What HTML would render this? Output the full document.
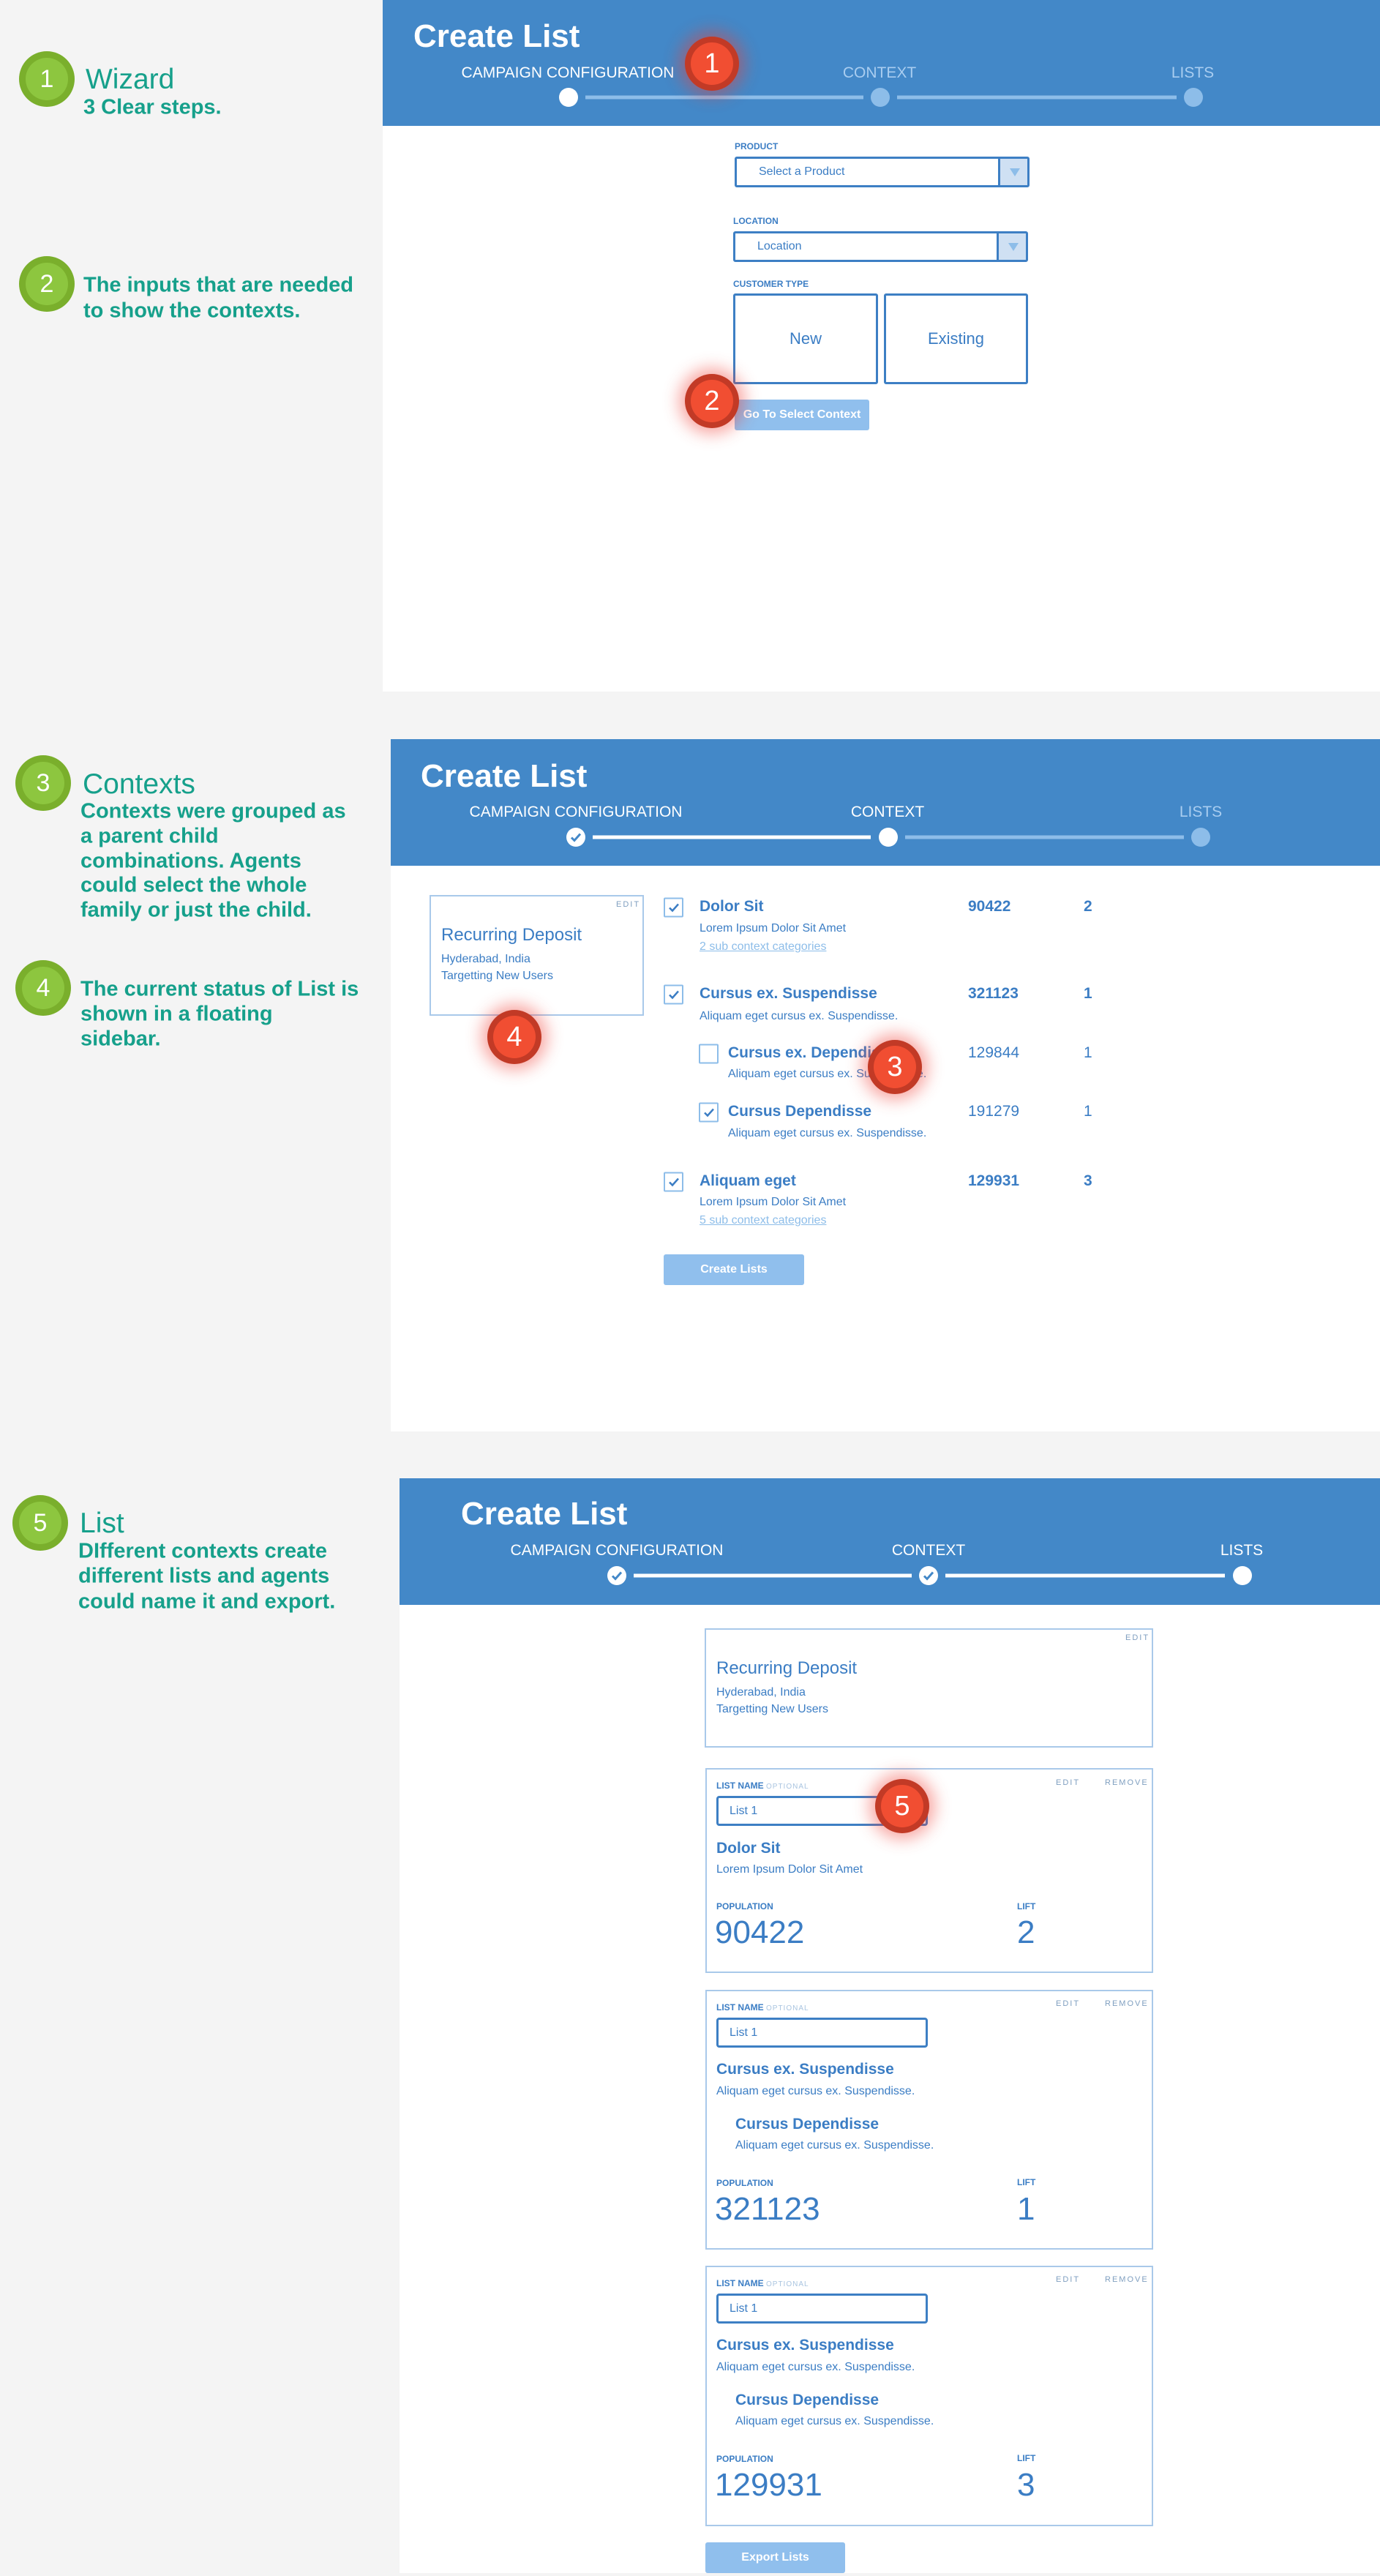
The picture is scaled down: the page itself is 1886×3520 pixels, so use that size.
<!DOCTYPE html>
<html><head><meta charset="utf-8">
<style>
*{margin:0;padding:0;box-sizing:border-box}
body{width:1886px;height:3520px;background:#f4f4f4;position:relative;overflow:hidden;font-family:"Liberation Sans",sans-serif;color:#3b7dc4}
.a{position:absolute;white-space:nowrap}
.c{transform:translate(-50%,-50%)}
.v{transform:translateY(-50%)}
.panel{position:absolute;background:#fff}
.hdr{position:absolute;background:#4388c8}
.title{color:#fff;font-weight:bold;font-size:44px}
.step{font-size:21px;color:#fff}
.step.off{color:#a9cdf0}
.dot{position:absolute;width:26px;height:26px;border-radius:50%;background:#fff;transform:translate(-50%,-50%)}
.dot.off{background:#8dbde9}
.line{position:absolute;height:5px;background:#fff;transform:translateY(-50%)}
.line.off{background:#8dbde9}
.g{position:absolute;width:76px;height:76px;border-radius:50%;background:#7aaf2c;transform:translate(-50%,-50%)}
.g::after{content:"";position:absolute;left:9px;top:9px;width:58px;height:58px;border-radius:50%;background:#8dc63f}
.g span{position:absolute;left:0;top:0;width:76px;height:76px;line-height:76px;text-align:center;color:#fff;font-size:34px;z-index:2}
.ann{color:#16a08b}
.ann.h{font-size:39px}
.ann.t{font-size:29px;font-weight:bold}
.r{position:absolute;width:74px;height:74px;border-radius:50%;background:#c23a26;transform:translate(-50%,-50%);box-shadow:0 0 22px 8px rgba(240,60,50,.45)}
.r::after{content:"";position:absolute;left:8px;top:8px;width:58px;height:58px;border-radius:50%;background:#f14e32}
.r span{position:absolute;left:0;top:0;width:74px;height:74px;line-height:74px;text-align:center;color:#fff;font-size:38px;z-index:2}
.lbl{font-size:12px;font-weight:bold;color:#3b7dc4}
.sel{position:absolute;border:3px solid #3d7fc4;border-radius:3px;background:#fff}
.sel .dd{position:absolute;right:0;top:0;bottom:0;width:40px;background:#cfe0f3;border-left:3px solid #3d7fc4}
.sel .dd::after{content:"";position:absolute;left:13px;top:13px;border-left:7px solid transparent;border-right:7px solid transparent;border-top:11px solid #8dbde9}
.sel .tx{position:absolute;left:30px;top:50%;transform:translateY(-50%);font-size:16px}
.box{position:absolute;border:3px solid #3d7fc4;border-radius:3px;background:#fff;font-size:22px;display:flex;align-items:center;justify-content:center}
.btn{position:absolute;background:#90bfed;border-radius:3px;color:#fff;font-weight:bold;font-size:16px;display:flex;align-items:center;justify-content:center}
.card{position:absolute;border:2px solid #a9c9ea;background:#fff}
.cb{position:absolute;width:27px;height:27px;border:2px solid #8dbde9;border-radius:2px;background:#fff;transform:translateY(-50%)}
.cb svg{position:absolute;left:4px;top:4px}
.it{font-size:21px;font-weight:bold}
.ds{font-size:16px}
.lk{font-size:16px;color:#8dbde9;text-decoration:underline}
.num{font-size:21px;font-weight:bold}
.num.n{font-weight:normal}
.ed{font-size:11px;letter-spacing:2px;color:#7f9fc0}
.inp{position:absolute;border:3px solid #3d7fc4;border-radius:4px;background:#fff;font-size:16px;padding-left:15px;display:flex;align-items:center}
.big{font-size:44px}
</style></head><body>

<!-- ============ PANEL 1 ============ -->
<div class="panel" style="left:523px;top:0;width:1363px;height:945px"></div>
<div class="hdr" style="left:523px;top:0;width:1363px;height:172px"></div>
<div class="a title v" style="left:565px;top:50px">Create List</div>
<div class="a step c" style="left:776px;top:100px">CAMPAIGN CONFIGURATION</div>
<div class="a step off c" style="left:1202px;top:100px">CONTEXT</div>
<div class="a step off c" style="left:1630px;top:100px">LISTS</div>
<div class="line off" style="left:800px;top:133px;width:380px"></div>
<div class="line off" style="left:1226px;top:133px;width:382px"></div>
<div class="dot" style="left:777px;top:133px"></div>
<div class="dot off" style="left:1203px;top:133px"></div>
<div class="dot off" style="left:1631px;top:133px"></div>

<div class="a lbl v" style="left:1004px;top:200px">PRODUCT</div>
<div class="sel" style="left:1004px;top:214px;width:403px;height:42px"><div class="tx">Select a Product</div><div class="dd"></div></div>
<div class="a lbl v" style="left:1002px;top:302px">LOCATION</div>
<div class="sel" style="left:1002px;top:316px;width:403px;height:42px"><div class="tx">Location</div><div class="dd"></div></div>
<div class="a lbl v" style="left:1002px;top:388px">CUSTOMER TYPE</div>
<div class="box" style="left:1002px;top:401px;width:198px;height:124px">New</div>
<div class="box" style="left:1208px;top:401px;width:197px;height:124px">Existing</div>
<div class="btn" style="left:1004px;top:546px;width:184px;height:42px">Go To Select Context</div>
<div class="r" style="left:973px;top:87px"><span>1</span></div>
<div class="r" style="left:973px;top:548px"><span>2</span></div>

<div class="g" style="left:64px;top:108px"><span>1</span></div>
<div class="a ann h v" style="left:117px;top:109px">Wizard</div>
<div class="a ann t v" style="left:114px;top:147px">3 Clear steps.</div>
<div class="g" style="left:64px;top:388px"><span>2</span></div>
<div class="a ann t v" style="left:114px;top:390px">The inputs that are needed</div>
<div class="a ann t v" style="left:114px;top:425px">to show the contexts.</div>

<!-- ============ PANEL 2 ============ -->
<div class="panel" style="left:534px;top:1010px;width:1352px;height:946px"></div>
<div class="hdr" style="left:534px;top:1010px;width:1352px;height:173px"></div>
<div class="a title v" style="left:575px;top:1061px">Create List</div>
<div class="a step c" style="left:787px;top:1110px">CAMPAIGN CONFIGURATION</div>
<div class="a step c" style="left:1213px;top:1110px">CONTEXT</div>
<div class="a step off c" style="left:1641px;top:1110px">LISTS</div>
<div class="line" style="left:810px;top:1144px;width:380px"></div>
<div class="line off" style="left:1237px;top:1144px;width:381px"></div>
<div class="dot" style="left:787px;top:1144px"><svg width="26" height="26" viewBox="0 0 26 26"><path d="M7 13.5l4 4 8-9" fill="none" stroke="#4388c8" stroke-width="3"/></svg></div>
<div class="dot" style="left:1214px;top:1144px"></div>
<div class="dot off" style="left:1641px;top:1144px"></div>

<div class="card" style="left:587px;top:1223px;width:293px;height:165px"></div>
<div class="a ed v" style="left:842px;top:1236px">EDIT</div>
<div class="a v" style="left:603px;top:1278px;font-size:24px">Recurring Deposit</div>
<div class="a ds v" style="left:603px;top:1311px">Hyderabad, India</div>
<div class="a ds v" style="left:603px;top:1334px">Targetting New Users</div>

<div class="cb" style="left:907px;top:1240px"><svg width="16" height="16" viewBox="0 0 16 16"><path d="M2 8l4 4 8-9" fill="none" stroke="#3b7dc4" stroke-width="2.5"/></svg></div>
<div class="a it v" style="left:956px;top:1239px">Dolor Sit</div>
<div class="a ds v" style="left:956px;top:1269px">Lorem Ipsum Dolor Sit Amet</div>
<div class="a lk v" style="left:956px;top:1294px">2 sub context categories</div>
<div class="a num v" style="left:1323px;top:1239px">90422</div>
<div class="a num v" style="left:1481px;top:1239px">2</div>

<div class="cb" style="left:907px;top:1359px"><svg width="16" height="16" viewBox="0 0 16 16"><path d="M2 8l4 4 8-9" fill="none" stroke="#3b7dc4" stroke-width="2.5"/></svg></div>
<div class="a it v" style="left:956px;top:1358px">Cursus ex. Suspendisse</div>
<div class="a ds v" style="left:956px;top:1389px">Aliquam eget cursus ex. Suspendisse.</div>
<div class="a num v" style="left:1323px;top:1358px">321123</div>
<div class="a num v" style="left:1481px;top:1358px">1</div>

<div class="cb" style="left:955px;top:1440px"></div>
<div class="a it v" style="left:995px;top:1439px">Cursus ex. Dependisse</div>
<div class="a ds v" style="left:995px;top:1468px">Aliquam eget cursus ex. Suspendisse.</div>
<div class="a num n v" style="left:1323px;top:1439px">129844</div>
<div class="a num n v" style="left:1481px;top:1439px">1</div>

<div class="cb" style="left:955px;top:1520px"><svg width="16" height="16" viewBox="0 0 16 16"><path d="M2 8l4 4 8-9" fill="none" stroke="#3b7dc4" stroke-width="2.5"/></svg></div>
<div class="a it v" style="left:995px;top:1519px">Cursus Dependisse</div>
<div class="a ds v" style="left:995px;top:1549px">Aliquam eget cursus ex. Suspendisse.</div>
<div class="a num n v" style="left:1323px;top:1519px">191279</div>
<div class="a num n v" style="left:1481px;top:1519px">1</div>

<div class="cb" style="left:907px;top:1615px"><svg width="16" height="16" viewBox="0 0 16 16"><path d="M2 8l4 4 8-9" fill="none" stroke="#3b7dc4" stroke-width="2.5"/></svg></div>
<div class="a it v" style="left:956px;top:1614px">Aliquam eget</div>
<div class="a ds v" style="left:956px;top:1643px">Lorem Ipsum Dolor Sit Amet</div>
<div class="a lk v" style="left:956px;top:1668px">5 sub context categories</div>
<div class="a num v" style="left:1323px;top:1614px">129931</div>
<div class="a num v" style="left:1481px;top:1614px">3</div>

<div class="btn" style="left:907px;top:1714px;width:192px;height:42px">Create Lists</div>
<div class="r" style="left:703px;top:1417px"><span>4</span></div>
<div class="r" style="left:1223px;top:1458px"><span>3</span></div>

<div class="g" style="left:59px;top:1070px"><span>3</span></div>
<div class="a ann h v" style="left:113px;top:1072px">Contexts</div>
<div class="a ann t v" style="left:110px;top:1109px">Contexts were grouped as</div>
<div class="a ann t v" style="left:110px;top:1143px">a parent child</div>
<div class="a ann t v" style="left:110px;top:1177px">combinations. Agents</div>
<div class="a ann t v" style="left:110px;top:1210px">could select the whole</div>
<div class="a ann t v" style="left:110px;top:1244px">family or just the child.</div>
<div class="g" style="left:59px;top:1350px"><span>4</span></div>
<div class="a ann t v" style="left:110px;top:1352px">The current status of List is</div>
<div class="a ann t v" style="left:110px;top:1386px">shown in a floating</div>
<div class="a ann t v" style="left:110px;top:1420px">sidebar.</div>

<!-- ============ PANEL 3 ============ -->
<div class="panel" style="left:546px;top:2020px;width:1340px;height:1496px"></div>
<div class="hdr" style="left:546px;top:2020px;width:1340px;height:173px"></div>
<div class="a title v" style="left:630px;top:2069px">Create List</div>
<div class="a step c" style="left:843px;top:2119px">CAMPAIGN CONFIGURATION</div>
<div class="a step c" style="left:1269px;top:2119px">CONTEXT</div>
<div class="a step c" style="left:1697px;top:2119px">LISTS</div>
<div class="line" style="left:866px;top:2153px;width:380px"></div>
<div class="line" style="left:1292px;top:2153px;width:382px"></div>
<div class="dot" style="left:843px;top:2153px"><svg width="26" height="26" viewBox="0 0 26 26"><path d="M7 13.5l4 4 8-9" fill="none" stroke="#4388c8" stroke-width="3"/></svg></div>
<div class="dot" style="left:1269px;top:2153px"><svg width="26" height="26" viewBox="0 0 26 26"><path d="M7 13.5l4 4 8-9" fill="none" stroke="#4388c8" stroke-width="3"/></svg></div>
<div class="dot" style="left:1698px;top:2153px"></div>

<div class="card" style="left:963px;top:2225px;width:613px;height:163px"></div>
<div class="a ed v" style="left:1538px;top:2238px">EDIT</div>
<div class="a v" style="left:979px;top:2280px;font-size:24px">Recurring Deposit</div>
<div class="a ds v" style="left:979px;top:2313px">Hyderabad, India</div>
<div class="a ds v" style="left:979px;top:2336px">Targetting New Users</div>

<!-- card 1 -->
<div class="card" style="left:964px;top:2416px;width:612px;height:280px"></div>
<div class="a lbl v" style="left:979px;top:2440px">LIST NAME <span style="font-weight:normal;font-size:10px;letter-spacing:1px;color:#a9c4e0">OPTIONAL</span></div>
<div class="a ed v" style="left:1443px;top:2436px">EDIT</div>
<div class="a ed v" style="left:1510px;top:2436px">REMOVE</div>
<div class="inp" style="left:979px;top:2454px;width:289px;height:41px">List 1</div>
<div class="a it v" style="left:979px;top:2526px">Dolor Sit</div>
<div class="a ds v" style="left:979px;top:2555px">Lorem Ipsum Dolor Sit Amet</div>
<div class="a lbl v" style="left:979px;top:2605px">POPULATION</div>
<div class="a lbl v" style="left:1390px;top:2605px">LIFT</div>
<div class="a big v" style="left:977px;top:2641px">90422</div>
<div class="a big v" style="left:1390px;top:2641px">2</div>
<div class="r" style="left:1233px;top:2468px"><span>5</span></div>

<!-- card 2 -->
<div class="card" style="left:964px;top:2719px;width:612px;height:355px"></div>
<div class="a lbl v" style="left:979px;top:2743px">LIST NAME <span style="font-weight:normal;font-size:10px;letter-spacing:1px;color:#a9c4e0">OPTIONAL</span></div>
<div class="a ed v" style="left:1443px;top:2738px">EDIT</div>
<div class="a ed v" style="left:1510px;top:2738px">REMOVE</div>
<div class="inp" style="left:979px;top:2757px;width:289px;height:41px">List 1</div>
<div class="a it v" style="left:979px;top:2828px">Cursus ex. Suspendisse</div>
<div class="a ds v" style="left:979px;top:2858px">Aliquam eget cursus ex. Suspendisse.</div>
<div class="a it v" style="left:1005px;top:2903px">Cursus Dependisse</div>
<div class="a ds v" style="left:1005px;top:2932px">Aliquam eget cursus ex. Suspendisse.</div>
<div class="a lbl v" style="left:979px;top:2983px">POPULATION</div>
<div class="a lbl v" style="left:1390px;top:2982px">LIFT</div>
<div class="a big v" style="left:977px;top:3019px">321123</div>
<div class="a big v" style="left:1390px;top:3019px">1</div>

<!-- card 3 -->
<div class="card" style="left:964px;top:3096px;width:612px;height:356px"></div>
<div class="a lbl v" style="left:979px;top:3120px">LIST NAME <span style="font-weight:normal;font-size:10px;letter-spacing:1px;color:#a9c4e0">OPTIONAL</span></div>
<div class="a ed v" style="left:1443px;top:3115px">EDIT</div>
<div class="a ed v" style="left:1510px;top:3115px">REMOVE</div>
<div class="inp" style="left:979px;top:3134px;width:289px;height:41px">List 1</div>
<div class="a it v" style="left:979px;top:3205px">Cursus ex. Suspendisse</div>
<div class="a ds v" style="left:979px;top:3235px">Aliquam eget cursus ex. Suspendisse.</div>
<div class="a it v" style="left:1005px;top:3280px">Cursus Dependisse</div>
<div class="a ds v" style="left:1005px;top:3309px">Aliquam eget cursus ex. Suspendisse.</div>
<div class="a lbl v" style="left:979px;top:3360px">POPULATION</div>
<div class="a lbl v" style="left:1390px;top:3359px">LIFT</div>
<div class="a big v" style="left:977px;top:3396px">129931</div>
<div class="a big v" style="left:1390px;top:3396px">3</div>

<div class="btn" style="left:964px;top:3474px;width:191px;height:42px">Export Lists</div>

<div class="g" style="left:55px;top:2081px"><span>5</span></div>
<div class="a ann h v" style="left:109px;top:2082px">List</div>
<div class="a ann t v" style="left:107px;top:2120px">DIfferent contexts create</div>
<div class="a ann t v" style="left:107px;top:2154px">different lists and agents</div>
<div class="a ann t v" style="left:107px;top:2189px">could name it and export.</div>

</body></html>
